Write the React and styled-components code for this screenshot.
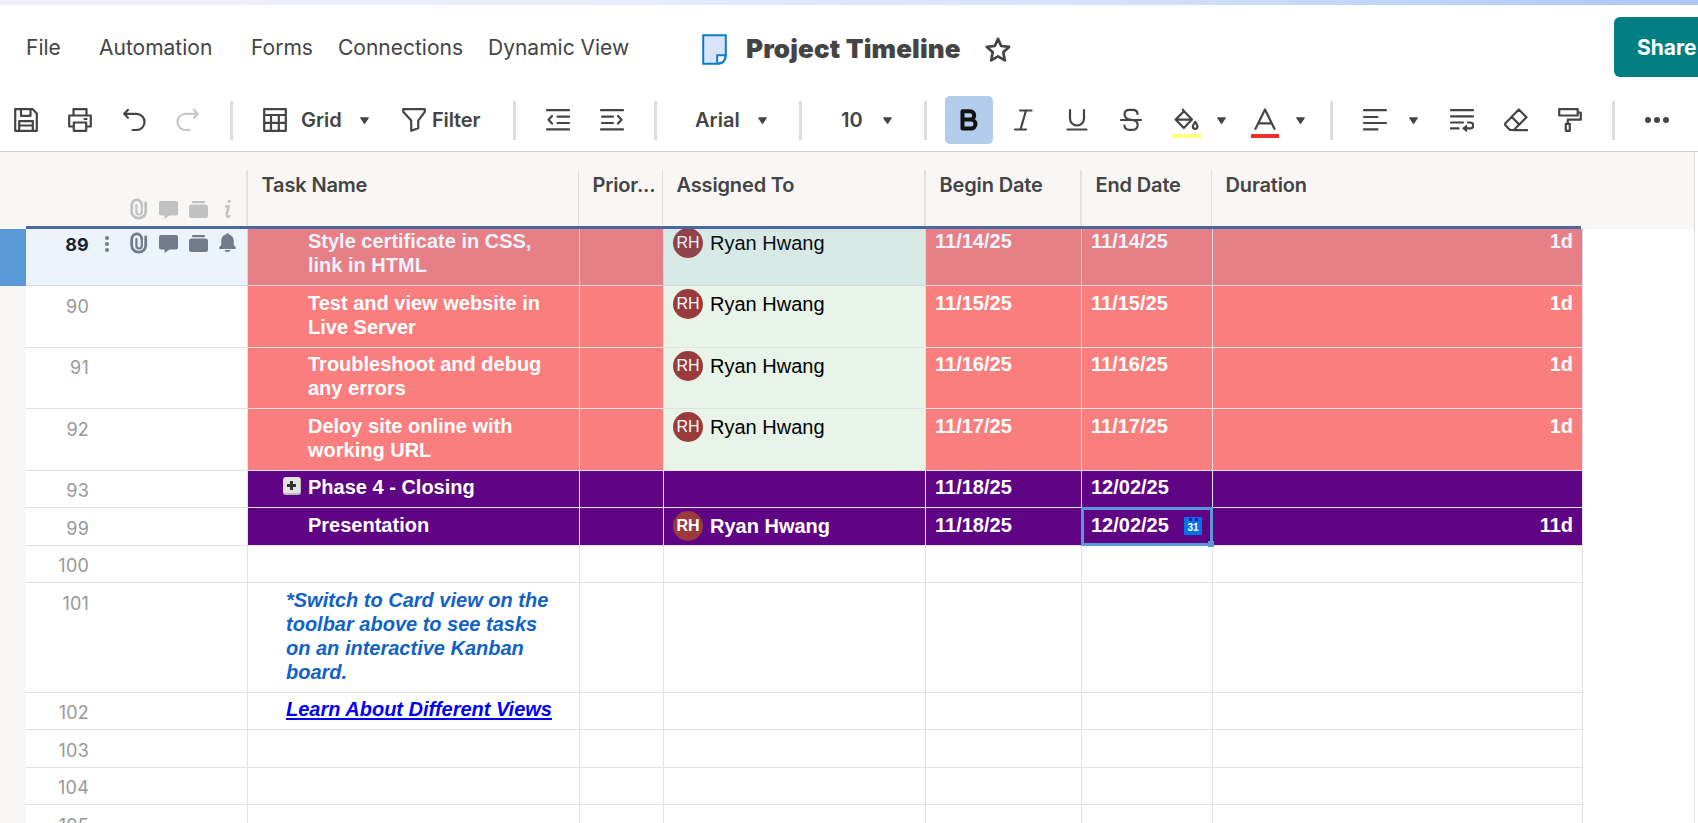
import React from "react";
import styled, { createGlobalStyle, css } from "styled-components";

const GlobalStyle = createGlobalStyle`
  *, *::before, *::after { box-sizing: border-box; }
  html, body { margin: 0; padding: 0; background: #fff; overflow: hidden; }
  body { font-family: Inter, "Liberation Sans", sans-serif; color: #444; }
`;

const Page = styled.div`
  width: 1698px;
  height: 823px;
  display: flex;
  flex-direction: column;
  overflow: hidden;
  background: #fff;
`;

const TopStrip = styled.div`
  height: 5px;
  flex: none;
  background: linear-gradient(90deg, #f3f0fe 0%, #e8ecfd 35%, #d5e1fb 66%, #adc6f9 100%);
`;

const TitleBar = styled.header`
  height: 85px;
  flex: none;
  display: flex;
  align-items: flex-start;
  overflow: hidden;
`;

const Menu = styled.nav`
  display: flex;
  width: 702px;
  flex: none;
  padding: 31px 0 0 26px;
`;

const MenuItem = styled.a`
  font-size: 21px;
  line-height: 24px;
  white-space: nowrap;
  flex: none;
  width: ${(p) => p.$w}px;
`;

const DocTitle = styled.div`
  display: flex;
  align-items: center;
  flex: none;
  width: 912px;
  padding-top: 27px;
  height: 62px;
`;

const DocName = styled.h1`
  margin: -1px 0 0 19px;
  width: 239px;
  font-size: 26px;
  line-height: 34px;
  font-weight: 900;
  letter-spacing: 0.15px;
  white-space: nowrap;
`;

const ShareButton = styled.button`
  margin-top: 12px;
  width: 120px;
  height: 60px;
  flex: none;
  border: 0;
  border-radius: 6px;
  background: #007f82;
  color: #fff;
  font: 700 21px/24px Inter, sans-serif;
  text-align: left;
  padding: 1px 0 0 23px;
`;

const Toolbar = styled.div`
  height: 62px;
  flex: none;
  display: flex;
  align-items: center;
  padding: 0 0 1px 14px;
  border-bottom: 1px solid #d0d0d0;
`;

const Tool = styled.span`
  display: flex;
  align-items: center;
  flex: none;
  width: ${(p) => p.$w || 24}px;
  margin-left: ${(p) => p.$ml || 0}px;
  color: ${(p) => (p.$disabled ? "#c8c8c8" : "#444")};
  svg { display: block; flex: none; }
`;

const ColorTool = styled(Tool)`
  flex-direction: column;
  align-items: center;
  padding-top: 6px;
  &::after {
    content: "";
    width: 100%;
    height: 4px;
    margin-top: 2px;
    background: ${(p) => p.$swatch};
  }
`;

const ToolLabel = styled.span`
  flex: none;
  width: ${(p) => p.$w}px;
  margin-left: ${(p) => p.$ml}px;
  font-size: 20px;
  line-height: 24px;
  font-weight: 600;
  letter-spacing: ${(p) => p.$ls || 0}px;
  white-space: nowrap;
`;

const Divider = styled.span`
  flex: none;
  width: 3px;
  height: 39px;
  margin: 1px 0 0 ${(p) => p.$ml}px;
  background: #dedede;
`;

const ActiveTool = styled.span`
  flex: none;
  display: flex;
  align-items: center;
  justify-content: center;
  width: 48px;
  height: 48px;
  margin-left: ${(p) => p.$ml}px;
  border-radius: 5px;
  background: #b3cceb;
  color: #111;
`;

const CaretSvg = styled.svg`
  flex: none;
  display: block;
  margin-left: ${(p) => p.$ml}px;
`;

const Caret = ({ ml }) => (
  <CaretSvg $ml={ml} width="9" height="7" viewBox="0 0 9 7">
    <path d="M0.8 0.3h7.4c.6 0 .8.5.5.9L5.2 6.4c-.4.5-1 .5-1.4 0L.3 1.2C0 .8.2.3.8.3z" fill="#444" />
  </CaretSvg>
);

const Icon = ({ w = 24, h = 24, sw = 2.2, children }) => (
  <svg width={w} height={h} viewBox={`0 0 ${w} ${h}`} fill="none" stroke="currentColor" strokeWidth={sw} strokeLinecap="round" strokeLinejoin="round">
    {children}
  </svg>
);

/* ---------- sheet ---------- */

const SheetArea = styled.main`
  flex: 1;
  display: flex;
  min-height: 0;
`;

const SheetMain = styled.section`
  width: 1694px;
  flex: none;
  display: flex;
  flex-direction: column;
  min-height: 0;
`;

const RightRail = styled.div`
  flex: 1;
  border-left: 1px solid #dfdfdf;
`;

const columns = "222px 332px 84px 262px 156px 131px 370px";

const HeaderRow = styled.div`
  height: 77px;
  flex: none;
  padding: 18px 0 0 26px;
  background: #f8f7f5;
`;

const HeaderGrid = styled.div`
  display: grid;
  grid-template-columns: 222px 331px 84px 263px 156px 130px 369px;
  height: 59px;
  width: 1555px;
  border-bottom: 3px solid #4b679f;
`;

const HeaderCell = styled.div`
  border-right: ${(p) => p.$b}px solid #e2e1e0;
  padding: 3px 0 0 13.5px;
  font-size: 20px;
  line-height: 24px;
  font-weight: ${(p) => p.$fw || 560};
  letter-spacing: -0.15px;
  white-space: nowrap;
  overflow: hidden;
`;

const HeaderIcons = styled.div`
  border-right: 2px solid #e2e1e0;
  display: flex;
  align-items: flex-start;
  padding: 28px 0 0 103px;
  color: #c1c1c1;
`;

const Body = styled.div`
  flex: 1;
  min-height: 0;
  overflow: hidden;
  padding-left: 26px;
  background: linear-gradient(90deg, #f8f7f5 26px, #fff 26px);
`;

const Row = styled.div`
  position: relative;
  display: grid;
  grid-template-columns: ${columns};
  width: 1557px;
  height: ${(p) => p.$h}px;
  ${(p) =>
    p.$selected &&
    css`
      margin-top: -5px;
      &::before {
        content: "";
        position: absolute;
        left: -26px;
        top: 0;
        bottom: 0;
        width: 26px;
        background: #5b98d8;
      }
      &::after {
        content: "";
        position: absolute;
        inset: 0;
        background: rgba(74, 140, 215, 0.1);
      }
    `}
`;

const Cell = styled.div`
  position: relative;
  min-width: 0;
  border-right: 1px solid #e2e2e2;
  border-bottom: 1px solid #e2e2e2;
  background: ${(p) => p.$bg || "#fff"};
  color: ${(p) => p.$fg || "#fff"};
  font-family: "Liberation Sans", Arial, sans-serif;
  font-size: 20px;
  line-height: 24px;
  font-weight: 700;
  padding: ${(p) => 4 + (p.$dy || 0)}px 9px 0 9px;
  text-align: ${(p) => p.$align || "left"};
  white-space: nowrap;
`;

const TaskCell = styled(Cell)`
  padding-left: ${(p) => p.$indent}px;
`;

const NumberCell = styled(Cell)`
  display: flex;
  align-items: flex-start;
  padding: ${(p) => 8 + (p.$dy || 0)}px 0 0 0;
  font-family: Inter, sans-serif;
  font-weight: 400;
`;

const RowNumber = styled.span`
  width: 63px;
  text-align: right;
  font-size: 18px;
  line-height: 24px;
  letter-spacing: 0.2px;
  font-weight: ${(p) => (p.$strong ? 700 : 400)};
  color: ${(p) => (p.$strong ? "#10151c" : "#989898")};
`;

const RowIcons = styled.span`
  display: flex;
  color: #757a80;
  margin: -1px 0 0 15px;
`;

const Glyph = styled.svg`
  display: block;
  flex: none;
  width: ${(p) => p.$w}px;
  height: 22px;
  margin-left: ${(p) => p.$ml || 0}px;
`;

const Assignee = styled.div`
  display: flex;
  align-items: center;
  height: 30px;
  margin-top: ${(p) => -1 + (p.$dy || 0)}px;
  color: ${(p) => p.$fg};
  font-weight: ${(p) => (p.$strong ? 700 : 400)};
`;

const Avatar = styled.span`
  width: 30px;
  height: 30px;
  border-radius: 50%;
  background: #993b3d;
  color: #fff;
  font-size: 16px;
  line-height: 30px;
  text-align: center;
  margin: 0 7px 0 0;
`;

const NoteLine = styled.div`
  font-style: italic;
`;

const NoteLink = styled.a`
  font-style: italic;
  color: #0000f5;
  text-decoration: underline;
  text-decoration-thickness: 2px;
  text-underline-offset: 2px;
`;

const Expander = styled.span`
  position: absolute;
  left: 35px;
  top: 6px;
  width: 18px;
  height: 18px;
  border-radius: 3px;
  background: #e3e3e3;
  border-right: 1px solid #bcbcbc;
  border-bottom: 2px solid #bcbcbc;
  svg { display: block; }
`;

const Selection = styled.div`
  position: absolute;
  z-index: 1;
  inset: -1px;
  border: 3px solid #5b98d8;
  &::after {
    content: "";
    position: absolute;
    right: -4px;
    bottom: -4px;
    width: 6px;
    height: 6px;
    background: #5b98d8;
  }
`;

const CalendarBadge = styled.span`
  position: absolute;
  right: 10px;
  top: 9px;
  width: 18px;
  height: 18px;
  border-radius: 1px;
  background: #0073eb;
  color: #fff;
  font: 700 10px/22px "Liberation Sans", sans-serif;
  text-align: center;
  &::before, &::after {
    content: "";
    position: absolute;
    top: 1px;
    width: 3px;
    height: 3px;
    background: #600486;
  }
  &::before { left: 5px; }
  &::after { right: 4px; }
`;

const Clip = ({ ml }) => (
  <Glyph $w={18} $ml={ml} viewBox="0 0 18 22" fill="none" stroke="currentColor" strokeLinecap="round">
    <path d="M11.800 5.500v8.300a2.700 2.700 0 0 1-5.400 0V7" strokeWidth="2.200" />
    <path d="M15.700 5v8.800a6.600 6.500 0 0 1-6.600 6.300h-.6A6.900 6.500 0 0 1 1.700 13.800V7.500A5.100 5.700 0 0 1 11.800 6.500" strokeWidth="2.800" />
  </Glyph>
);
const Comment = ({ ml }) => (
  <Glyph $w={19} $ml={ml} viewBox="0 0 19 22" fill="currentColor">
    <path d="M2 3h15a2 2 0 0 1 2 2v10.500a2 2 0 0 1-2 2h-6.500L5.500 21v-3.500H2a2 2 0 0 1-2-2V5a2 2 0 0 1 2-2z" />
  </Glyph>
);
const Proof = ({ ml }) => (
  <Glyph $w={19} $ml={ml} viewBox="0 0 19 22" fill="currentColor">
    <rect x="3" y="3" width="13" height="2.200" rx="1" />
    <rect x="0" y="6.500" width="19" height="13.500" rx="2.500" />
  </Glyph>
);
const Info = ({ ml }) => (
  <Glyph $w={8} $ml={ml} viewBox="0 0 8 22" fill="none" stroke="currentColor" strokeWidth="2.400" strokeLinecap="round">
    <circle cx="5.400" cy="3.300" r="1.600" fill="currentColor" stroke="none" />
    <path d="M2 8.500h2.600L2.600 16.500c-.5 2.200.8 2.900 3 1.800" />
  </Glyph>
);
const Bell = ({ ml }) => (
  <Glyph $w={17} $ml={ml} viewBox="0 0 17 22" fill="currentColor">
    <path d="M8.500 1.200c.9 0 1.400.5 1.500 1.300 3 .7 4.700 3 4.700 6v4.200l2 2.600c.5.8.1 1.600-.8 1.600H1.100c-.9 0-1.300-.8-.8-1.600l2-2.600V8.500c0-3 1.700-5.300 4.700-6 .1-.8.600-1.300 1.500-1.300zM5.500 18h6c-.3 1.200-1.400 1.900-3 1.900s-2.700-.7-3-1.900z" />
  </Glyph>
);
const Kebab = () => (
  <Glyph $w={6} viewBox="0 0 6 22" fill="currentColor">
    <circle cx="3" cy="6" r="2" />
    <circle cx="3" cy="12" r="2" />
    <circle cx="3" cy="18" r="2" />
  </Glyph>
);

const RED = "#f97e7d";
const GREEN = "#e7f4e7";
const PURPLE = "#600486";

const rows = [
  { n: 89, h: 62, dy: 1, bg: RED, who: GREEN, task: ["Style certificate in CSS,", "link in HTML"], b: "11/14/25", e: "11/14/25", d: "1d", person: true, selected: true },
  { n: 90, h: 62, dy: 1, bg: RED, who: GREEN, task: ["Test and view website in", "Live Server"], b: "11/15/25", e: "11/15/25", d: "1d", person: true },
  { n: 91, h: 61, bg: RED, who: GREEN, task: ["Troubleshoot and debug", "any errors"], b: "11/16/25", e: "11/16/25", d: "1d", person: true },
  { n: 92, h: 62, dy: 1, bg: RED, who: GREEN, task: ["Deloy site online with", "working URL"], b: "11/17/25", e: "11/17/25", d: "1d", person: true },
  { n: 93, h: 37, bg: PURPLE, who: PURPLE, task: ["Phase 4 - Closing"], b: "11/18/25", e: "12/02/25", expander: true },
  { n: 99, h: 38, dy: 1, bg: PURPLE, who: PURPLE, task: ["Presentation"], b: "11/18/25", e: "12/02/25", d: "11d", person: true, strong: true, active: true },
  { n: 100, h: 37 },
  { n: 101, h: 110, dy: 1, note: ["*Switch to Card view on the", "toolbar above to see tasks", "on an interactive Kanban", "board."] },
  { n: 102, h: 37, link: "Learn About Different Views" },
  { n: 103, h: 38, dy: 1 },
  { n: 104, h: 37 },
  { n: 105, h: 38, dy: 1 },
];

function SheetRow({ r }) {
  const dy = r.dy || 0;
  return (
    <Row $h={r.h} $selected={r.selected}>
      <NumberCell $dy={dy}>
        <RowNumber $strong={r.selected}>{r.n}</RowNumber>
        {r.selected && (
          <RowIcons>
            <Kebab />
            <Clip ml={20} />
            <Comment ml={11} />
            <Proof ml={11} />
            <Bell ml={11} />
          </RowIcons>
        )}
      </NumberCell>
      <TaskCell $bg={r.bg} $fg={r.note ? "#1162c6" : "#fff"} $dy={dy} $indent={r.note || r.link ? 38 : 60}>
        {r.expander && (
          <Expander>
            <svg width="17" height="16" viewBox="0 0 17 16">
              <path d="M7 4h3v3h3v3h-3v3H7v-3H4V7h3z" fill="#333" />
            </svg>
          </Expander>
        )}
        {r.task && r.task.map((t) => <div key={t}>{t}</div>)}
        {r.note && r.note.map((t) => <NoteLine key={t}>{t}</NoteLine>)}
        {r.link && <NoteLink>{r.link}</NoteLink>}
      </TaskCell>
      <Cell $bg={r.bg} />
      <Cell $bg={r.who}>
        {r.person && (
          <Assignee $dy={r.selected ? 1 : 0} $fg={r.strong ? "#fff" : "#000"} $strong={r.strong}>
            <Avatar>RH</Avatar>
            Ryan Hwang
          </Assignee>
        )}
      </Cell>
      <Cell $bg={r.bg} $dy={dy}>{r.b}</Cell>
      <Cell $bg={r.bg} $dy={dy}>
        {r.e}
        {r.active && <CalendarBadge>31</CalendarBadge>}
        {r.active && <Selection />}
      </Cell>
      <Cell $bg={r.bg} $dy={dy} $align="right">{r.d}</Cell>
    </Row>
  );
}

export default function App() {
  return (
    <Page>
      <GlobalStyle />
      <TopStrip />
      <TitleBar>
        <Menu>
          <MenuItem $w={73}>File</MenuItem>
          <MenuItem $w={152}>Automation</MenuItem>
          <MenuItem $w={87}>Forms</MenuItem>
          <MenuItem $w={150}>Connections</MenuItem>
          <MenuItem $w={150}>Dynamic View</MenuItem>
        </Menu>
        <DocTitle>
          <svg width="25" height="31" viewBox="0 0 25 31">
            <path d="M1 1h23v21.500L17 30H1z" fill="#d9e4fa" />
            <path d="M1.200 1.200h22.600v20.300c0 5-3 8.300-8 8.300H1.200z" fill="none" stroke="#0a7cc8" strokeWidth="2" />
            <path d="M23.500 21.200h-8.300v8.300c5 0 8.300-3.300 8.300-8.300z" fill="#fff" stroke="#0a7cc8" strokeWidth="2" />
          </svg>
          <DocName>Project Timeline</DocName>
          <svg width="26" height="26" viewBox="0 0 26 26" fill="none" stroke="#444" strokeWidth="2.700" strokeLinejoin="round">
            <path d="M13 1.800l3.200 7.200 7.900.9-5.800 5.300 1.500 8.100L13 19.300 6.200 23.300l1.500-8.100L1.900 9.900l7.900-.9z" />
          </svg>
        </DocTitle>
        <ShareButton>Share</ShareButton>
      </TitleBar>
      <Toolbar>
        <Tool>
          <Icon>
            <path d="M1.200 1.200h17.600l4 4.200v17.400H1.200z" />
            <path d="M7 1.500v6.300h9.500V1.500M5.200 22.500v-9.300h13.600v9.300M5.500 17.500h13" />
          </Icon>
        </Tool>
        <Tool $ml={30}>
          <Icon>
            <path d="M5.500 7.500V1.200h13v6.300M5 18.500H1.200v-11h21.600v11H19M16.500 11h2" />
            <path d="M5.800 14.500h12.400v8.300H5.800z" />
          </Icon>
        </Tool>
        <Tool $ml={30}>
          <Icon>
            <path d="M6 1.800L2.200 5.800 6 9.800M2.500 5.800H14.500a8 8 0 0 1 8 8.200 8 8 0 0 1-8 8h-4" />
          </Icon>
        </Tool>
        <Tool $ml={30} $disabled>
          <Icon>
            <path d="M18 1.800l3.800 4-3.800 4M21.500 5.800H9.500a8 8 0 0 0-8 8.200 8 8 0 0 0 8 8h4" />
          </Icon>
        </Tool>
        <Divider $ml={30} />
        <Tool $ml={30}>
          <Icon>
            <path d="M1.200 1.200h21.600v21.600H1.200zM1.500 7h21M1.500 14.800h21M8 7v15.500M15.800 7v15.500" />
          </Icon>
        </Tool>
        <ToolLabel $ml={14} $w={42}>Grid</ToolLabel>
        <Caret ml={17} />
        <Tool $ml={33}>
          <Icon>
            <path d="M1.200 1.200h21.600v2.600l-6.600 8.800v7.600l-7 2.600V12.600L1.200 3.800z" />
          </Icon>
        </Tool>
        <ToolLabel $ml={6} $w={50} $ls={-0.15}>Filter</ToolLabel>
        <Divider $ml={31} />
        <Tool $ml={30}>
          <Icon>
            <path d="M1 2.200h22M11.500 8.600h11.500M11.500 15h11.500M1 21.400h22M6 8L2.500 11.800 6 15.600" />
          </Icon>
        </Tool>
        <Tool $ml={30}>
          <Icon>
            <path d="M1 2.200h22M2 8.600h11M2 15h11M1 21.400h22M18 8l3.500 3.800L18 15.600" />
          </Icon>
        </Tool>
        <Divider $ml={30} />
        <ToolLabel $ml={38} $w={46}>Arial</ToolLabel>
        <Caret ml={17} />
        <Divider $ml={32} />
        <ToolLabel $ml={39} $w={26}>10</ToolLabel>
        <Caret ml={16} />
        <Divider $ml={32} />
        <ActiveTool $ml={18}>
          <Icon sw={4}>
            <path d="M5.500 3.200h7.500a4.200 4.200 0 0 1 0 8.400H5.500zM5.500 11.600h8.500a4.500 4.500 0 0 1 0 9H5.500z" />
          </Icon>
        </ActiveTool>
        <Tool $ml={18}>
          <Icon>
            <path d="M9 2.500h11.500M4 21.500h11M15 2.500L9.500 21.500" />
          </Icon>
        </Tool>
        <Tool $ml={30}>
          <Icon>
            <path d="M5 2v8.500a7 7 0 0 0 14 0V2M2.500 21.500h19" />
          </Icon>
        </Tool>
        <Tool $ml={30}>
          <Icon>
            <path d="M18.500 6c0-2.500-2-4.200-5-4.200h-3c-3 0-5 1.800-5 4.500S8 11.600 12 11.800s6.700 1.700 6.700 5-2.200 5-5.200 5h-3c-3 0-5-1.800-5-4.300M2 12h20" />
          </Icon>
        </Tool>
        <ColorTool $ml={29} $w={29} $swatch="#ffff82">
          <Icon w={25} h={24}>
            <path d="M10 3.200l8 8.200-8.200 8.600L1.600 11.600zM10 3.200L8.800 1.600M1.800 11.600h16" />
            <path d="M21.300 14c1.300 1.800 2.200 3 2.200 4.500a2.300 2.300 0 0 1-4.600 0c0-1.500 1.100-2.700 2.400-4.500z" />
          </Icon>
        </ColorTool>
        <Caret ml={16} />
        <ColorTool $ml={25} $w={28} $swatch="#ee302c">
          <Icon>
            <path d="M2.500 20.800L12 1.500l9.500 19.300M6 15.300h12" />
          </Icon>
        </ColorTool>
        <Caret ml={17} />
        <Divider $ml={25} />
        <Tool $ml={30}>
          <Icon>
            <path d="M1 2.200h22M1 9h13.500M1 15h22M1 21.400h13.500" />
          </Icon>
        </Tool>
        <Caret ml={22} />
        <Tool $ml={32}>
          <Icon>
            <path d="M1 2.200h22M1 8.400h22M1 14.500h12M1 20.400h7.500M18 14.500h2.300a2.900 2.900 0 0 1 0 5.900H14" />
            <path d="M16.500 17.400l-3.500 3 3.500 2.800z" fill="currentColor" strokeWidth="1.200" />
          </Icon>
        </Tool>
        <Tool $ml={30}>
          <Icon>
            <path d="M14.800 1.500l7.700 7.700L9.800 22H6L1.200 17v-1.500zM7.800 9l7.600 7.600M9.500 22.200h13.500" />
          </Icon>
        </Tool>
        <Tool $ml={30}>
          <Icon>
            <path d="M1.200 1.200h18.500v6.300H1.200zM20 4.500h2.800v7.200H9.800v4M7.800 15.800h4v7h-4z" />
          </Icon>
        </Tool>
        <Divider $ml={30} />
        <Tool $ml={30}>
          <svg width="24" height="24" viewBox="0 0 24 24" fill="#444">
            <circle cx="3" cy="12" r="3" />
            <circle cx="12" cy="12" r="3" />
            <circle cx="21" cy="12" r="3" />
          </svg>
        </Tool>
      </Toolbar>
      <SheetArea>
        <SheetMain>
          <HeaderRow>
            <HeaderGrid>
              <HeaderIcons>
                <Clip ml={1} />
                <Comment ml={11} />
                <Proof ml={11} />
                <Info ml={16} />
              </HeaderIcons>
              <HeaderCell $b={1} $fw={640}>Task Name</HeaderCell>
              <HeaderCell $b={1}>Prior...</HeaderCell>
              <HeaderCell $b={2}>Assigned To</HeaderCell>
              <HeaderCell $b={2}>Begin Date</HeaderCell>
              <HeaderCell $b={1}>End Date</HeaderCell>
              <HeaderCell $b={0}>Duration</HeaderCell>
            </HeaderGrid>
          </HeaderRow>
          <Body>
            {rows.map((r) => (
              <SheetRow key={r.n} r={r} />
            ))}
          </Body>
        </SheetMain>
        <RightRail />
      </SheetArea>
    </Page>
  );
}
